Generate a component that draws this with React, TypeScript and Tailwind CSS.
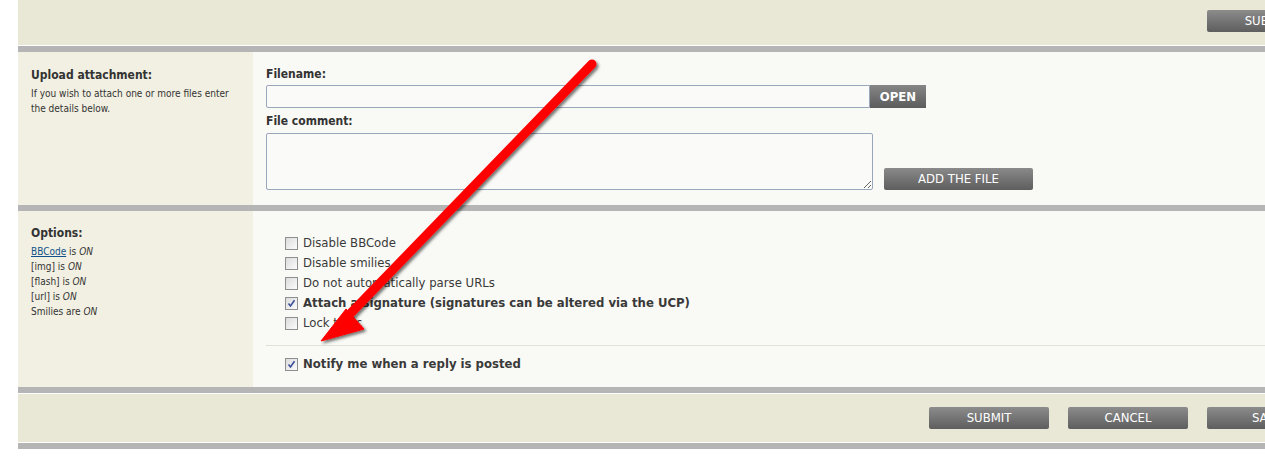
import React from "react";

const font = "font-['DejaVu_Sans_Condensed','DejaVu_Sans',sans-serif]";

function Bar() {
  return <div className="h-[6px] bg-[#b5b5b5]" />;
}

function GrayButton({ label, className = "" }: { label: string; className?: string }) {
  return (
    <button
      className={`h-[22px] w-[120px] shrink-0 rounded-[2px] bg-gradient-to-b from-[#8c8c8c] to-[#5e5e5e] text-[13px] leading-[22px] text-white ${className}`}
    >
      {label}
    </button>
  );
}

function Check({ checked }: { checked?: boolean }) {
  return (
    <span className="flex h-[13px] w-[13px] shrink-0 items-center justify-center border border-[#8e8f8f] bg-gradient-to-br from-[#dcdcdc] to-[#fbfbfb]">
      {checked && (
        <svg width="9" height="9" viewBox="0 0 9 9">
          <path d="M1.5 4.5 L3.5 7 L7.5 1.2" fill="none" stroke="#3c4f9a" strokeWidth="1.6" />
        </svg>
      )}
    </span>
  );
}

function Option({ label, checked, bold }: { label: string; checked?: boolean; bold?: boolean }) {
  return (
    <label className="flex h-[20px] items-center gap-[5px]">
      <Check checked={checked} />
      <span className={`text-[13px] text-[#3a3a3a] ${bold ? "font-bold" : ""}`}>{label}</span>
    </label>
  );
}

function Status({ name, link }: { name: string; link?: boolean }) {
  return (
    <div className="h-[15px] leading-[15px]">
      {link ? <a className="text-[#105289] underline">{name}</a> : name} is{" "}
      <em className="italic">ON</em>
    </div>
  );
}

export default function App() {
  return (
    <div className={`relative h-[457px] w-full overflow-hidden bg-white pl-[18px] text-[#333] ${font}`}>
      <div className="w-[1345px]">
        {/* previous buttons */}
        <div className="flex h-[45px] justify-end bg-[#e9e7d6] pr-[36px] pt-[10px]">
          <GrayButton label="SUBMIT" />
        </div>
        <div className="h-px bg-white" />
        <Bar />

        {/* Upload attachment */}
        <div className="flex h-[153px]">
          <div className="w-[235px] shrink-0 bg-[#f2f0e2] pl-[13px] pt-[15px]">
            <h3 className="text-[12px] font-bold leading-[16px]">Upload attachment:</h3>
            <p className="mt-[3px] text-[10px] leading-[15px]">
              If you wish to attach one or more files enter
              <br />
              the details below.
            </p>
          </div>
          <div className="flex-1 bg-[#f9f9f5] pl-[13px] pt-[14px]">
            <div className="text-[12px] font-bold leading-[16px]">Filename:</div>
            <div className="mt-[3px] flex">
              <input className="h-[23px] w-[604px] rounded-l-[2px] border border-[#9aa6b9] bg-[#fafaf8]" />
              <button className="h-[23px] w-[56px] bg-gradient-to-b from-[#868686] to-[#5c5c5c] text-[13px] font-bold text-white">
                OPEN
              </button>
            </div>
            <div className="mt-[5px] text-[12px] font-bold leading-[16px]">File comment:</div>
            <div className="mt-[4px] flex items-end gap-[11px]">
              <textarea className="h-[57px] w-[607px] resize-y rounded-[2px] border border-[#9aa6b9] bg-[#fafaf8]" />
              <button className="h-[22px] w-[149px] rounded-[2px] bg-gradient-to-b from-[#8a8a8a] to-[#5e5e5e] text-[13px] text-white">
                ADD THE FILE
              </button>
            </div>
          </div>
        </div>
        <Bar />

        {/* Options */}
        <div className="flex h-[176px]">
          <div className="w-[235px] shrink-0 bg-[#f2f0e2] pl-[13px] pt-[14px]">
            <h3 className="text-[12px] font-bold leading-[16px]">Options:</h3>
            <div className="mt-[3px] text-[10px]">
              <Status name="BBCode" link />
              <Status name="[img]" />
              <Status name="[flash]" />
              <Status name="[url]" />
              <div className="h-[15px] leading-[15px]">
                Smilies are <em className="italic">ON</em>
              </div>
            </div>
          </div>
          <div className="flex-1 bg-[#f9f9f5] pl-[13px] pt-[22px]">
            <div className="pl-[19px]">
              <Option label="Disable BBCode" />
              <Option label="Disable smilies" />
              <Option label="Do not automatically parse URLs" />
              <Option label="Attach a signature (signatures can be altered via the UCP)" checked bold />
              <Option label="Lock topic" />
            </div>
            <div className="mt-[12px] h-px bg-[#e2e1d2]" />
            <div className="pl-[19px] pt-[8px]">
              <Option label="Notify me when a reply is posted" checked bold />
            </div>
          </div>
        </div>
        <Bar />
        <div className="h-px bg-white" />

        {/* Submit buttons */}
        <div className="flex h-[48px] justify-end gap-[19px] bg-[#e9e7d6] pr-[36px] pt-[13px]">
          <GrayButton label="SUBMIT" />
          <GrayButton label="CANCEL" />
          <GrayButton label="SAVE" />
        </div>
        <div className="h-px bg-white" />
        <Bar />
      </div>

      {/* red annotation arrow */}
      <svg className="pointer-events-none absolute left-0 top-0" width="1265" height="457">
        <defs>
          <filter id="sh" x="-20%" y="-20%" width="140%" height="140%">
            <feDropShadow dx="2" dy="2" stdDeviation="1.5" floodColor="#000" floodOpacity="0.55" />
          </filter>
        </defs>
        <g filter="url(#sh)">
          <line x1="592" y1="64" x2="348" y2="316" stroke="#ff0000" strokeWidth="9" strokeLinecap="round" />
          <polygon points="321,341 346,309 364,329" fill="#ff0000" stroke="#ff0000" strokeWidth="1" strokeLinejoin="round" />
        </g>
      </svg>
    </div>
  );
}
